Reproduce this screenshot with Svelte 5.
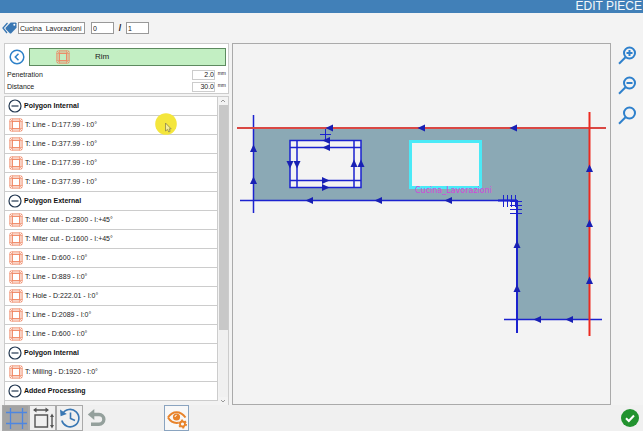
<script lang="ts">
  type Group = { title: string; rows: string[]; open: boolean };

  let pieceName = $state('Cucina_Lavorazioni');
  let current = $state('0');
  let total = $state('1');
  let penetration = $state('2.0');
  let distance = $state('30.0');

  let groups: Group[] = $state([
    {
      title: 'Polygon Internal',
      open: true,
      rows: ['T: Line - D:177.99 - I:0°', 'T: Line - D:377.99 - I:0°', 'T: Line - D:177.99 - I:0°', 'T: Line - D:377.99 - I:0°']
    },
    {
      title: 'Polygon External',
      open: true,
      rows: [
        'T: Miter cut - D:2800 - I:+45°',
        'T: Miter cut - D:1600 - I:+45°',
        'T: Line - D:600 - I:0°',
        'T: Line - D:889 - I:0°',
        'T: Hole - D:222.01 - I:0°',
        'T: Line - D:2089 - I:0°',
        'T: Line - D:600 - I:0°'
      ]
    },
    { title: 'Polygon Internal', open: true, rows: ['T: Milling - D:1920 - I:0°'] },
    { title: 'Added Processing', open: true, rows: [] }
  ]);

  // direction arrows on the contour: x, y, rotation (0 = up)
  const arrows = [
    [329, 127.5, 270], [421, 127.5, 270], [513, 127.5, 270],
    [253, 148, 0], [253, 180, 0],
    [309, 200, 270], [378, 200, 270], [448, 200, 270],
    [589, 168, 0], [589, 223, 0], [589, 280, 0],
    [516.5, 244, 0], [516.5, 288, 0],
    [537, 319, 270], [569, 319, 270],
    [326, 140, 270], [326, 147, 270],
    [325, 180, 90], [325, 187, 90],
    [289.5, 164, 180], [296.5, 164, 180],
    [353.5, 163, 0], [360.5, 163, 0]
  ];
</script>

{#snippet rimIcon()}
  <svg class="rim" viewBox="0 0 14 14" aria-hidden="true">
    <rect x="0.7" y="0.7" width="12.6" height="12.6" rx="2" />
    <rect x="3.5" y="3.5" width="7" height="7" />
    <path d="M3.5 .7v12.6M10.5 .7v12.6M.7 3.5h12.6M.7 10.5h12.6M1 1l2.5 2.5M13 1l-2.5 2.5M1 13l2.5-2.5M13 13l-2.5-2.5M2 4v6M12 4v6M4 2h6M4 12h6" />
  </svg>
{/snippet}

{#snippet lens(sign: string)}
  <svg viewBox="0 0 20 20" aria-hidden="true">
    <circle cx="12.5" cy="7" r="5.5" />
    <path d="M8.5 11.2L2 17.7" />
    <path d={sign} />
  </svg>
{/snippet}

<div class="app">
  <header>EDIT PIECE</header>

  <div class="piece">
    <svg class="tags" viewBox="0 0 15 12" aria-hidden="true">
      <path class="back" d="M5.5 1L1 6l4 5" />
      <path d="M8.6.6h5.2l.7.7v4.5L9 11.4h-1L3.6 7V5.7z" />
      <circle cx="12.3" cy="2.8" r="1" />
    </svg>
    <input class="name" aria-label="Piece name" bind:value={pieceName} />
    <input class="count" aria-label="Current piece" bind:value={current} />
    <span class="slash">/</span>
    <input class="count" aria-label="Total pieces" bind:value={total} />
  </div>

  <main>
    <aside>
      <section class="tool">
        <div class="tool-head">
          <button class="back-btn" aria-label="Back">
            <svg viewBox="0 0 16 16"><circle cx="8" cy="8" r="6.8" /><path d="M9.5 4.8L6.3 8l3.2 3.2" /></svg>
          </button>
          <button class="tool-name">{@render rimIcon()}<span>Rim</span></button>
        </div>
        <div class="param">
          <label for="penetration">Penetration</label>
          <input id="penetration" bind:value={penetration} />
          <span>mm</span>
        </div>
        <div class="param">
          <label for="distance">Distance</label>
          <input id="distance" bind:value={distance} />
          <span>mm</span>
        </div>
      </section>

      <section class="list">
        <div class="rows">
          {#each groups as group}
            <button class="row group" aria-expanded={group.open} onclick={() => (group.open = !group.open)}>
              <svg viewBox="0 0 14 14" aria-hidden="true"><circle cx="7" cy="7" r="6" /><path d="M3.5 7h7" /></svg>
              {group.title}
            </button>
            {#if group.open}
              {#each group.rows as row}
                <button class="row">{@render rimIcon()}{row}</button>
              {/each}
            {/if}
          {/each}
        </div>
        <div class="scrollbar" aria-hidden="true">
          <svg viewBox="0 0 8 8"><path d="M2 5l2-2 2 2" /></svg>
          <div class="track"><div class="thumb"></div></div>
          <svg viewBox="0 0 8 8"><path d="M2 3l2 2 2-2" /></svg>
        </div>
        <svg class="pointer" viewBox="0 0 22 22" aria-hidden="true">
          <circle cx="11" cy="11" r="10.8" />
          <path d="M10.5 10v8l2-1.6 1.3 2.6 1.4-.7-1.2-2.4h2.2z" />
        </svg>
      </section>
    </aside>

    <section class="canvas">
      <svg viewBox="233 44 377 360" role="img" aria-label="Piece drawing">
        <path class="slab" fill-rule="evenodd" d="M253 128H589V320H517V200H253zM290 140V188H361V140zM411 142V187H480V142z" />
        <g class="blue">
          <path d="M253.500 115V213M240 200.500H517M504 319.500H602" />
          <path d="M290 140.500H361V187.500H290zM297 140.500V187.500M354 140.500V187.500M290 147.500H361M290 180.500H361" />
          <path class="thin" d="M325.500 128V141M320 134.500H331" />
          <path class="thin" d="M503.500 195v12M507.500 195v12M511.500 195v12M515.500 195v12M510 201.500h12M510 205.500h12M510 209.500h12M510 213.500h12" />
          <path class="thick" d="M498 200.500H517M517 200V333" />
        </g>
        <path class="red-top" d="M237 128H606" />
        <path class="red-side" d="M589.500 112V336" />
        <rect class="selected" x="410.500" y="141.500" width="70" height="46" />
        <text x="415" y="193">Cucina_Lavorazioni</text>
        {#each arrows as [x, y, angle]}
          <path class="arrow" d="M-3.500 3.500L0-4 3.500 3.500z" transform="translate({x + 0.5} {y + 0.5}) rotate({angle})" />
        {/each}
      </svg>
    </section>

    <nav>
      <button aria-label="Zoom in">{@render lens('M9.500 7h6M12.500 4v6')}</button>
      <button aria-label="Zoom out">{@render lens('M9.500 7h6')}</button>
      <button aria-label="Zoom to fit">{@render lens('')}</button>
    </nav>
  </main>

  <footer>
    <button class="tab active" aria-label="Contour">
      <svg class="contour" viewBox="0 0 24 24"><path d="M6.500 2v21M18.500 2v21M2 6.500h21M2 17.500h21" /></svg>
    </button>
    <button class="tab" aria-label="Dimensions">
      <svg class="dims" viewBox="0 0 24 24">
        <path d="M4 9h12.500v12H4zM3 4h14M21 9v12" />
        <path class="tip" d="M2 4l3.500-2.500v5zM18 4l-3.500-2.500v5zM21 7.500l-2 3.500h4zM21 22.500l-2-3.500h4z" />
      </svg>
    </button>
    <button class="tab" aria-label="History">
      <svg class="history" viewBox="0 0 24 24">
        <path d="M4.500 8a8.700 8.700 0 1 1-.7 6.500M12.500 6.500v6l4.500 2" />
        <path class="tip" d="M2 3.500l.6 6.800 6.200-2.400z" />
      </svg>
    </button>
    <button class="undo" aria-label="Undo">
      <svg viewBox="0 0 20 20"><path d="M5 6.500h7a4.700 4.700 0 0 1 0 9.700H4" /><path class="tip" d="M.8 6.500L7.300 1v11z" /></svg>
    </button>
    <button class="tab view" aria-label="View settings">
      <svg viewBox="0 0 24 24">
        <path d="M3 11.500C7.500 4.500 15.500 4.500 20.500 11.500M3 11.500c2.500 4 6 5.800 10 5.300" />
        <circle class="pupil" cx="11.500" cy="11" r="3.600" />
        <path class="glint" d="M10 11a1.700 1.700 0 0 1 1.700-1.700" />
        <circle class="teeth" cx="17.500" cy="18" r="3.700" />
        <circle class="gear" cx="17.500" cy="18" r="2.500" />
      </svg>
    </button>
    <button class="ok" aria-label="Confirm">
      <svg viewBox="0 0 18 18"><circle cx="9" cy="9" r="9" /><path d="M5 9.300l2.800 2.700L13 6.500" /></svg>
    </button>
  </footer>
</div>

<style>
  :global(body) {
    margin: 0;
    background: #f3f3f3;
  }

  .app {
    display: flex;
    flex-direction: column;
    height: 100vh;
    color: #222;
    font-family: 'Liberation Sans', Arial, sans-serif;
    font-size: 7px;
    line-height: 10px;
  }

  button,
  input {
    box-sizing: border-box;
    margin: 0;
    padding: 0;
    border: 0;
    background: none;
    color: inherit;
    font: inherit;
  }

  svg {
    display: block;
    flex: none;
    fill: none;
  }

  header {
    height: 13px;
    padding-right: 1px;
    background: #4180b8;
    color: #f4f8fb;
    font-size: 12px;
    line-height: 13px;
    text-align: right;
  }

  .piece {
    display: flex;
    align-items: center;
    height: 30px;
    padding-left: 2px;
  }
  .piece input {
    height: 12px;
    padding-left: 1px;
    border: 1px solid #999;
    background: #fff;
  }
  .tags { width: 15px; height: 12px; fill: #3977b3; }
  .tags .back { fill: none; stroke: #3977b3; stroke-width: 1.3; }
  .tags circle { fill: #fff; }
  .piece .name { width: 67px; margin: 0 6px 0 1px; }
  .piece .count { width: 23px; }
  .slash {
    width: 12px;
    font-size: 9px;
    font-weight: bold;
    text-align: center;
  }

  main {
    display: flex;
    flex: 1;
    min-height: 0;
  }

  aside {
    display: flex;
    flex-direction: column;
    flex: 0 0 225px;
    min-height: 0;
    padding: 0 3px 0 4px;
  }

  .tool {
    padding: 4px 2px 0;
    border: 1px solid #ccc;
    background: #fff;
  }
  .tool-head { display: flex; gap: 4px; margin-bottom: 3px; padding-left: 2px; }
  .back-btn svg {
    width: 16px;
    height: 16px;
    stroke: #2d80c8;
    stroke-width: 1.5;
  }
  .tool-name {
    display: flex;
    flex: 1;
    align-items: center;
    gap: 25px;
    height: 18px;
    padding-left: 26px;
    border: 1px solid #5d8a5f;
    background: #c3efc3;
    font-size: 8px;
  }
  .rim { width: 14px; height: 14px; stroke: #ef8460; stroke-width: 0.7; }

  .param { display: flex; align-items: center; height: 12px; }
  .param label { flex: 1; }
  .param input {
    width: 23px;
    height: 10px;
    border: 1px solid #ccc;
    text-align: right;
  }
  .param span { width: 11px; font-size: 5px; line-height: 8px; text-align: right; align-self: start; }

  .list {
    position: relative;
    display: flex;
    flex: 1;
    min-height: 0;
    margin-top: 2px;
    border: 1px solid #ccc;
    border-bottom: 0;
  }
  .rows {
    flex: 1;
    overflow: auto;
    scrollbar-width: none;
  }
  .row {
    display: flex;
    align-items: center;
    gap: 2px;
    width: 100%;
    height: 19px;
    padding-left: 4px;
    border-bottom: 1px solid #ccc;
    border-right: 1px solid #ccc;
    background: #fff;
    text-align: left;
  }
  .group { padding-left: 3px; color: #111; font-weight: bold; }
  .group svg { width: 14px; height: 14px; stroke: #223750; stroke-width: 1.2; }

  .scrollbar { display: flex; flex-direction: column; width: 9px; padding-left: 1px; }
  .scrollbar svg { width: 8px; height: 8px; stroke: #999; }
  .track { flex: 1; background: #f0f0f0; }
  .thumb { height: 77%; background: #c8c8c8; }

  .pointer { position: absolute; top: 16px; left: 150px; width: 22px; height: 22px; fill: #f4e63c; }
  .pointer path { fill: #f4ee9c; stroke: #8d8548; stroke-width: 0.8; }

  .canvas {
    flex: 1;
    min-width: 0;
    border: 1px solid #aaa;
  }
  .canvas svg { width: 100%; height: 100%; }
  .slab { fill: #8ba9b5; }
  .blue { stroke: #1b22cf; stroke-width: 1.5; }
  .thin { stroke-width: 1; }
  .thick { stroke-width: 2; }
  .red-top { stroke: #d94743; stroke-width: 2; }
  .red-side { stroke: #ec2a20; stroke-width: 2; }
  .selected { stroke: #4aeaf7; stroke-width: 3; }
  .arrow { fill: #1820b4; }
  .canvas text { fill: #d545dc; font-family: 'DejaVu Sans', sans-serif; font-size: 8px; }

  nav {
    display: flex;
    flex-direction: column;
    gap: 10px;
    width: 20px;
    padding: 3px 6px;
  }
  nav svg { width: 20px; height: 20px; stroke: #2e80cc; stroke-width: 2; }

  footer {
    display: flex;
    align-items: center;
    flex: none;
    height: 26px;
    padding: 0 4px 0 2px;
    background: #f0f0f0;
  }
  .tab {
    width: 27px;
    height: 26px;
    border: 1px solid #aaa;
    display: grid;
    place-items: center;
  }
  .tab svg { width: 24px; height: 24px; }
  .active { background: #a3a3a3; }
  .contour { stroke: #4d86e0; stroke-width: 1.3; }
  .dims { stroke: #555; stroke-width: 1.4; }
  .dims .tip { fill: #555; stroke: none; }
  .history { stroke: #3977b3; stroke-width: 1.6; }
  .history .tip { fill: #3977b3; stroke: none; }
  .undo { margin: 0 57px 0 4px; }
  .undo svg { width: 20px; height: 20px; stroke: #94a09c; stroke-width: 3.4; }
  .undo .tip { fill: #94a09c; stroke: none; }
  .view { width: 25px; border-color: #8aa4c0; background: #f8f8f8; }
  .view svg { stroke: #e8832a; stroke-width: 2; }
  .view .pupil { fill: #e8832a; stroke: none; }
  .view .glint { stroke: #fff; stroke-width: 1; }
  .view .teeth { stroke-width: 1.6; stroke-dasharray: 2 1.870; }
  .view .gear { fill: #f8f8f8; stroke-width: 1.8; }
  .ok { margin-left: auto; }
  .ok svg { width: 18px; height: 18px; fill: #22932f; }
  .ok path { fill: none; stroke: #fff; stroke-width: 2; }
</style>
